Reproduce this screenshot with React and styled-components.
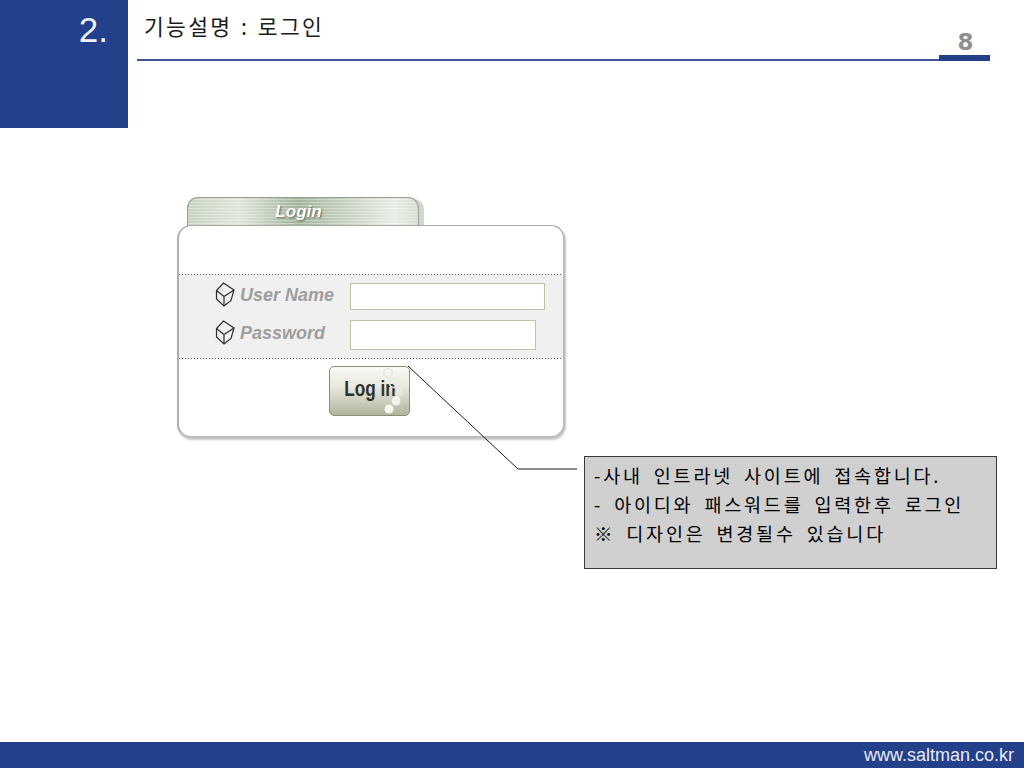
import React from 'react';
import styled, { createGlobalStyle } from 'styled-components';

const Global = createGlobalStyle`
  html, body { margin: 0; padding: 0; background: #fff; }
  body { font-family: "Liberation Sans", Arial, sans-serif; }
`;
const KR = `"Noto Sans CJK KR", "Liberation Sans", sans-serif`;

const Page = styled.div`
  width: 1024px; height: 768px; display: flex; flex-direction: column;
  overflow: hidden; background: #fff; position: relative;
`;
const Top = styled.header`display: flex; height: 128px; flex: none;`;
const Badge = styled.div`
  width: 128px; height: 128px; background: #23408a; color: #eef1fa; box-sizing: border-box;
  display: flex; justify-content: flex-end; padding: 11px 20px 0 0;
  font-size: 35px; line-height: 38px;
`;
const Heading = styled.div`
  margin-left: 9px; width: 853px; height: 61px; box-sizing: border-box;
  border-bottom: 2px solid #3f5596; position: relative; padding: 11px 0 0 7px;
`;
const Title = styled.h1`
  margin: 0; font: 400 21.5px/30px ${KR}; color: #1c1c1c; letter-spacing: 2.3px; word-spacing: 1.5px;
`;
const PageNum = styled.div`
  position: absolute; right: 0; bottom: -2px; width: 51px; height: 32px;
  box-sizing: border-box; border-bottom: 6px solid #23408a; text-align: center;
  font: 700 23px/26px "DejaVu Sans", sans-serif; color: #8f8f8f;
  padding-left: 2px;
`;
const Stage = styled.main`
  flex: 1; display: flex; align-items: flex-start; gap: 19px; padding: 69px 0 0 177px; position: relative;
`;
const Widget = styled.section`width: 388px; flex: none;`;
const Tab = styled.div`
  margin-left: 10px; width: 232px; height: 30px; box-sizing: border-box; padding-right: 9px;
  border: 1px solid #97a092; border-bottom: none; border-radius: 11px 11px 0 0;
  background:
    repeating-linear-gradient(0deg, rgba(255,255,255,.32) 0 1px, transparent 1px 3px),
    linear-gradient(90deg, #c6d3bf 0%, #dfe6da 22%, #a3b49b 48%, #bccab5 62%, #e8ede5 90%, #d5ddd0 100%);
  box-shadow: 6px 1px 0 -1px #d4d4d4;
  text-align: center; color: #fff; font: italic 700 17px/28px "Liberation Sans", sans-serif;
  text-shadow: 1px 1px 2px #56604f;
`;
const Card = styled.div`
  margin-top: -2px; height: 213px; box-sizing: border-box; background: #fff; position: relative;
  border: 2px solid #bcbcbc; border-top: 1px solid #a9a9a9; border-left-color: #b0b0b0; border-radius: 14px;
  padding-top: 48px; box-shadow: 1px 2px 2px #c8c8c8;
`;
const Band = styled.div`
  height: 85px; box-sizing: border-box;
  background:
    repeating-linear-gradient(90deg, #5c5c5c 0 1px, transparent 1px 3px) left top / 100% 1px no-repeat,
    repeating-linear-gradient(90deg, #5c5c5c 0 1px, transparent 1px 3px) left bottom / 100% 1px no-repeat,
    #f0f0f0;
  padding: 9px 0 0 36px; display: flex; flex-direction: column; gap: 10px;
`;
const Row = styled.div`display: flex; align-items: flex-start; height: ${p => p.$h}px;`;
const Lead = styled.div`
  display: flex; align-items: center; height: 25px; width: 135px; flex: none; margin-top: ${p => p.$shift}px;
`;
const Cube = () => (
  <svg width="20" height="25" viewBox="0 0 20 25" fill="none" stroke="#2c2c2c" strokeWidth="1.2" style={{ flex: 'none' }}>
    <path d="M8.5 1 L19 8 L16 18.5 L9 24 L1.5 17 L1.5 8.5 Z" />
    <path d="M1.5 8.5 L9 14.5 L19 8 M9 14.5 L9 24" />
  </svg>
);
const Label = styled.span`
  margin-left: 5px; color: #9e9e9e;
  font: italic 700 18px/24px "Liberation Sans", sans-serif; white-space: nowrap;
`;
const Field = styled.input`
  width: ${p => p.$w}px; height: ${p => p.$h}px; box-sizing: border-box; padding: 0; flex: none;
  border: 1px solid #bdc2a0; background: #fff; outline: none; margin: 0;
`;
const Actions = styled.div`display: flex; padding: 7px 0 0 150px;`;
const LoginBtn = styled.button`
  width: 81px; height: 50px; padding: 0 0 5px 0; position: relative; overflow: hidden;
  border: 1px solid #8b8d78; border-radius: 5px;
  background: linear-gradient(180deg, #fafaf6 0%, #e9e9df 40%, #b3b49d 100%);
  color: #2e312e; font: 700 22px/24px "Liberation Sans", sans-serif;
`;
const BtnText = styled.span`display: inline-block; transform: scaleX(.78); white-space: nowrap;`;
const Bubbles = styled.svg`position: absolute; left: 52px; top: 0; width: 28px; height: 50px;`;
const Callout = styled.aside`
  margin-top: 259px; width: 413px; height: 113px; box-sizing: border-box; flex: none;
  background: #d0d0d0; border: 1px solid #3a3a3a; padding: 4px 0 0 9px;
  font: 400 18.5px/29px ${KR}; color: #000; letter-spacing: 2.8px; word-spacing: 4px; white-space: pre;
`;
const Connector = styled.svg`position: absolute; left: 0; top: 0; width: 1024px; height: 768px; pointer-events: none;`;
const Footer = styled.footer`
  height: 26px; flex: none; background: #23408a; color: #e6eaf6; box-sizing: border-box;
  display: flex; align-items: center; justify-content: flex-end; padding: 0 10px 0 0;
  font-size: 18px; line-height: 26px;
`;

export default function App() {
  return (
    <Page>
      <Global />
      <Top>
        <Badge>2.</Badge>
        <Heading>
          <Title>기능설명 : 로그인</Title>
          <PageNum>8</PageNum>
        </Heading>
      </Top>
      <Stage>
        <Widget>
          <Tab>Login</Tab>
          <Card>
            <Band>
              <Row $h={27}>
                <Lead $shift={-1}><Cube /><Label>User Name</Label></Lead>
                <Field $w={195} $h={27} aria-label="User Name" />
              </Row>
              <Row $h={30}>
                <Lead $shift={0}><Cube /><Label>Password</Label></Lead>
                <Field $w={186} $h={30} aria-label="Password" />
              </Row>
            </Band>
            <Actions>
              <LoginBtn>
                <BtnText>Log in</BtnText>
                <Bubbles viewBox="0 0 28 50" fill="none">
                  <circle cx="6" cy="6" r="4.5" stroke="#e6e6de" strokeWidth="1.5" />
                  <circle cx="12" cy="16" r="4.5" stroke="#e6e6de" strokeWidth="1.5" />
                  <circle cx="17" cy="26" r="4.5" fill="#ecece6" opacity=".6" />
                  <circle cx="14" cy="34" r="4.5" fill="#f4f4ef" />
                  <circle cx="7" cy="42" r="4.5" fill="#f8f8f4" />
                </Bubbles>
              </LoginBtn>
            </Actions>
          </Card>
        </Widget>
        <Callout>{`-사내 인트라넷 사이트에 접속합니다.
- 아이디와 패스워드를 입력한후 로그인
※ 디자인은 변경될수 있습니다`}</Callout>
      </Stage>
      <Connector viewBox="0 0 1024 768" fill="none">
        <path d="M408 366 L518 469 L577 469" stroke="#1a1a1a" strokeWidth="1" />
      </Connector>
      <Footer>www.saltman.co.kr</Footer>
    </Page>
  );
}
